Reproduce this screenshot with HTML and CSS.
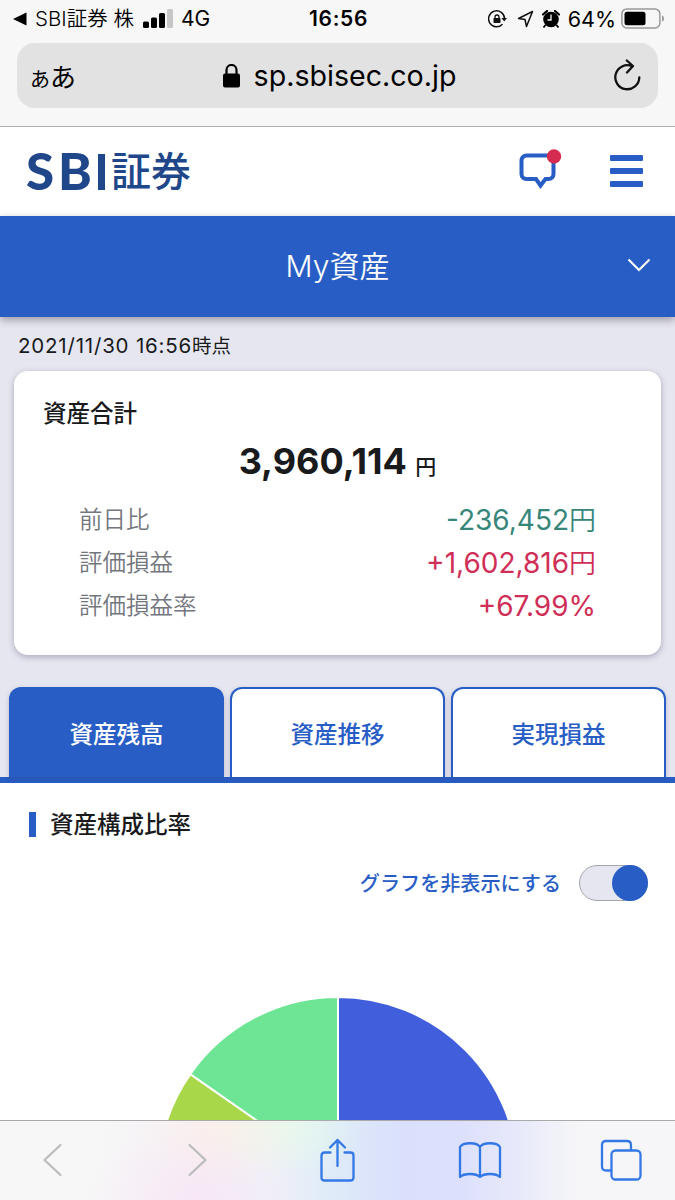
FILE: index.html
```html
<!DOCTYPE html>
<html lang="ja">
  <head>
    <meta charset="UTF-8">
    <title>My資産</title>
    <link rel="stylesheet" href="styles.css">
  </head>
  <body>
    <div class="browser">
      <div class="status">
        <div class="status-left">
          <svg width="14" height="14" viewBox="0 0 14 14"><path d="M0 7L13.500 0.500V13.500Z"/></svg>
          <span class="app">SBI証券 株</span>
          <svg class="signal" width="30" height="20" viewBox="0 0 30 20">
            <rect x="0" y="12.500" width="6" height="6.500" rx="1.500"/>
            <rect x="8" y="8.500" width="6" height="10.500" rx="1.500"/>
            <rect x="16" y="4" width="6" height="15" rx="1.500"/>
            <rect x="24" y="0" width="6" height="19" rx="1.500" fill="#c6c6c6"/>
          </svg>
          <span class="network">4G</span>
        </div>
        <div class="clock">16:56</div>
        <div class="status-right">
          <svg width="19" height="18" viewBox="0 0 19 18" fill="none" stroke="#111" stroke-width="1.500">
            <path d="M14.500 14.200A8 8 0 1 1 16.600 8.500"/>
            <path d="M13.500 8H19L16.200 11.500Z" fill="#111" stroke="none"/>
            <rect x="5.500" y="8" width="7" height="5" rx="0.800" fill="#111" stroke="none"/>
            <path d="M7 8.500V7A2 2 0 0 1 11 7V8.500" stroke-width="1.300"/>
          </svg>
          <svg class="location" width="17" height="18" viewBox="0 0 17 18" fill="none" stroke="#111" stroke-width="1.500" stroke-linejoin="round">
            <path d="M15.500 1.500L1.500 8.500L8 9.500L9.500 16.500Z"/>
          </svg>
          <svg class="alarm" width="18" height="18" viewBox="0 0 18 18">
            <circle cx="9" cy="9.500" r="7.800"/>
            <path d="M3.500 15L1.500 17.500M14.500 15L16.500 17.500" stroke="#000" stroke-width="1.800"/>
            <path d="M1 4.500L5 1M17 4.500L13 1" stroke="#000" stroke-width="2.200" stroke-linecap="round"/>
            <path d="M9 4.500V10H5.500" fill="none" stroke="#f7f7f7" stroke-width="1.300"/>
          </svg>
          <span class="percent">64%</span>
          <svg class="battery" width="44" height="21" viewBox="0 0 44 21">
            <rect x="0.900" y="0.900" width="38" height="19" rx="5" fill="none" stroke="#999" stroke-width="1.500"/>
            <rect x="3.500" y="3.700" width="21" height="13.500" rx="2.500"/>
            <path d="M41 7.500Q43 8 43 10.500Q43 13 41 13.500Z" fill="#999"/>
          </svg>
        </div>
      </div>
      <div class="address">
        <span class="reader"><small>あ</small>あ</span>
        <span class="url">
          <svg width="17" height="24" viewBox="0 0 17 24">
            <rect x="0" y="9.500" width="17" height="14" rx="2"/>
            <path d="M3.500 10V6A5 5 0 0 1 13.500 6V10" fill="none" stroke="#000" stroke-width="2.200"/>
          </svg>
          <span>sp.sbisec.co.jp</span>
        </span>
        <svg class="reload" width="27" height="33" viewBox="0 0 27 33" fill="none" stroke="#111" stroke-width="2.300" stroke-linecap="round" stroke-linejoin="round">
          <path d="M25.300 18.500A12 12 0 1 1 18 7.200M12.800 1.500L19 7L13 13.500"/>
        </svg>
      </div>
    </div>

    <div class="page">
      <div class="header">
        <div class="logo"><span class="s">S</span><span class="b">B</span><span class="i"></span><span class="kanji">証券</span></div>
        <div class="header-icons">
          <svg width="43" height="40" viewBox="0 0 43 40">
            <path d="M7.500 6.500H29.500A5 5 0 0 1 34.500 11.500V25A5 5 0 0 1 29.500 30H26.500L21.500 36.500L17 30H7.500A5 5 0 0 1 2.500 25V11.500A5 5 0 0 1 7.500 6.500Z" fill="none" stroke="#275dc5" stroke-width="4"/>
            <circle cx="35" cy="7.500" r="7.200" fill="#d52b50"/>
          </svg>
          <div class="menu"><i></i><i></i><i></i></div>
        </div>
      </div>

      <div class="title">
        <h1>My資産</h1>
        <svg width="24" height="14" viewBox="0 0 24 14" fill="none" stroke="#fff" stroke-width="2.200"><path d="M1.500 1.500L12 12L22.500 1.500"/></svg>
      </div>

      <div class="summary">
        <p class="date"><span>2021/11/30 16:56</span>時点</p>
        <div class="card">
          <h2>資産合計</h2>
          <p class="total">3,960,114 <small>円</small></p>
          <dl>
            <dt>前日比</dt><dd class="minus">-236,452<small>円</small></dd>
            <dt>評価損益</dt><dd class="plus">+1,602,816<small>円</small></dd>
            <dt>評価損益率</dt><dd class="plus">+67.99%</dd>
          </dl>
        </div>
        <ul class="tabs">
          <li class="active">資産残高</li>
          <li>資産推移</li>
          <li>実現損益</li>
        </ul>
      </div>

      <div class="balance">
        <h3>資産構成比率</h3>
        <div class="toggle">
          <span>グラフを非表示にする</span>
          <div class="switch"></div>
        </div>
        <svg class="chart" width="360" height="360" viewBox="-180 -180 360 360" stroke="#fff" stroke-width="2">
          <path d="M0 0V-180A180 180 0 0 1 0 180Z" fill="#415fdc"/>
          <path d="M0 0V180A180 180 0 0 1 -147.700 -102.900Z" fill="#a8d84a"/>
          <path d="M0 0L-147.700 -102.900A180 180 0 0 1 0 -180Z" fill="#6de594"/>
        </svg>
      </div>
    </div>

    <div class="toolbar">
      <svg width="44" height="34" viewBox="-12.500 0 44 34" class="off"><path d="M18 2L2 17L18 32"/></svg>
      <svg width="44" height="34" viewBox="-14.500 0 44 34" class="off"><path d="M2 2L18 17L2 32"/></svg>
      <svg width="44" height="44" viewBox="-4.500 0 44 44"><path d="M11 14.500H5Q2 14.500 2 17.500V39.500Q2 42.500 5 42.500H31Q34 42.500 34 39.500V17.500Q34 14.500 31 14.500H25M18 28V2M10.500 9.500L18 2L25.500 9.500"/></svg>
      <svg width="44" height="38" viewBox="0 0 44 38"><path d="M22 6C19 1 5 1 2 6V36C6 32 18 32 22 36C26 32 38 32 42 36V6C39 1 25 1 22 6V36"/></svg>
      <svg width="44" height="42" viewBox="0 0 44 42"><path d="M11 31.500H6Q2 31.500 2 27.500V6Q2 2 6 2H27Q31 2 31 6V11"/><rect x="11.500" y="11.500" width="29" height="29" rx="4"/></svg>
    </div>
  </body>
</html>
```

FILE: styles.css
```css
body
{
  box-sizing: border-box;
  width: 675px;
  height: 1200px;
  margin: 0;
  display: flex;
  flex-direction: column;
  overflow: hidden;
  background: #fff;
  color: #191a1c;
  font-family: Inter, "Noto Sans CJK JP", sans-serif;
}
svg
{
  display: block;
  flex: none;
}
h1, h2, h3, p, dl, dd, ul
{
  margin: 0;
  padding: 0;
}

/* browser bars */
.browser
{
  box-sizing: border-box;
  height: 127px;
  flex: none;
  background: #f7f7f7;
  border-bottom: 1px solid #b2b2b2;
  color: #000;
}
.status
{
  display: grid;
  grid-template-columns: 1fr auto 1fr;
  align-items: center;
  height: 37px;
  padding: 0 10px 0 13px;
  font-size: 21px;
  line-height: 36px;
}
.status-left,
.status-right
{
  display: flex;
  align-items: center;
  white-space: nowrap;
}
.status-right
{
  justify-content: flex-end;
}
.app
{
  margin-left: 8px;
  font-size: 20.5px;
  font-weight: 350;
}
.signal
{
  margin: 0 8px 0 9px;
}
.clock
{
  margin-right: 1px;
  font-weight: 600;
  font-size: 21px;
  letter-spacing: 0.7px;
}
.location
{
  margin: 0 8px 0 10px;
}
.percent
{
  margin: 0 5px 0 8px;
  font-size: 21.5px;
}
.address
{
  display: flex;
  align-items: center;
  justify-content: space-between;
  box-sizing: border-box;
  height: 65px;
  margin: 6px 17px 0;
  padding: 0 17px 0 13px;
  border-radius: 18px;
  background: #e2e2e2;
}
.reader
{
  width: 35px;
  font-size: 26px;
  white-space: nowrap;
}
.reader small
{
  font-size: 20px;
}
.url
{
  display: flex;
  align-items: center;
  gap: 14px;
  font-size: 28.600px;
}

/* site header */
.page
{
  flex: 1;
  min-height: 0;
  overflow: hidden;
}
.header
{
  display: flex;
  align-items: center;
  justify-content: space-between;
  height: 89px;
  padding: 0 32px 0 26px;
}
.logo
{
  display: flex;
  align-items: center;
  height: 60px;
  color: #20478a;
  font: 900 51px/60px Lato, sans-serif;
}
.logo .s
{
  width: 32px;
}
.logo .b
{
  width: 40px;
}
.logo .s,
.logo .b
{
  padding-bottom: 2px;
}
.logo .i
{
  width: 7px;
  height: 36px;
  margin-right: 6px;
  background: #20478a;
}
.logo .kanji
{
  padding-bottom: 6px;
  font: 500 40px/60px "Noto Sans CJK JP", sans-serif;
}
.header-icons
{
  display: flex;
  gap: 48px;
  padding-bottom: 5px;
}
.menu
{
  display: flex;
  flex-direction: column;
  gap: 7px;
  padding-top: 6px;
}
.menu i
{
  width: 33px;
  height: 6px;
  border-radius: 1px;
  background: #275dc5;
}
.title
{
  position: relative;
  display: grid;
  grid-template-columns: 1fr auto 1fr;
  align-items: center;
  height: 101px;
  background: #275dc5;
  box-shadow: 0 3px 8px rgba(60, 40, 50, 0.4);
  color: #fff;
}
.title h1
{
  grid-column: 2;
  padding-bottom: 6px;
  font-size: 30px;
  font-weight: 350;
}
.title svg
{
  justify-self: end;
  margin: 0 24px 3px 0;
}

/* totals */
.summary
{
  background: #e5e6ef;
}
.date
{
  height: 54px;
  padding-left: 18px;
  font-size: 19.5px;
  line-height: 57px;
}
.date span
{
  font-size: 20.500px;
  letter-spacing: 0.8px;
}
.card
{
  box-sizing: border-box;
  height: 284px;
  margin: 0 14px;
  padding: 25px 65px 0;
  border-radius: 14px;
  background: #fff;
  box-shadow: 0 2px 6px rgba(60, 55, 100, 0.35);
}
.card h2
{
  margin-left: -36px;
  font-size: 23.5px;
  font-weight: 500;
  line-height: 36px;
}
.total
{
  height: 66px;
  font-size: 36px;
  font-weight: 700;
  line-height: 58px;
  text-align: center;
}
.total small
{
  font-size: 21px;
  font-weight: 500;
}
.card dl
{
  display: grid;
  grid-template-columns: auto 1fr;
  grid-auto-rows: 43px;
  line-height: 43px;
}
.card dt
{
  color: #74767e;
  font-size: 23.5px;
  font-weight: 350;
}
.card dd
{
  font-size: 28px;
  font-weight: 400;
  line-height: 44px;
  text-align: right;
}
.card dd small
{
  font-size: 27px;
  font-weight: 350;
}
.minus
{
  color: #37867a;
}
.plus
{
  color: #cf2e56;
}
.tabs
{
  display: flex;
  gap: 6px;
  margin-top: 32px;
  padding: 0 9px;
  border-bottom: 6px solid #275dc5;
  list-style: none;
}
.tabs li
{
  box-sizing: border-box;
  flex: 1;
  height: 90px;
  border: 2px solid #275dc5;
  border-bottom: 0;
  border-radius: 12px 12px 0 0;
  background: #fff;
  box-shadow: 0 2px 5px rgba(60, 55, 100, 0.25);
  color: #275dc5;
  font-size: 23.5px;
  font-weight: 500;
  line-height: 91px;
  text-align: center;
}
.tabs .active
{
  background: #275dc5;
  color: #fff;
}

/* chart */
.balance h3
{
  display: flex;
  align-items: center;
  gap: 14px;
  padding: 24px 0 0 29px;
  font-size: 23.500px;
  font-weight: 500;
  line-height: 35px;
}
.balance h3::before
{
  content: "";
  width: 7px;
  height: 25px;
  background: #275dc5;
}
.toggle
{
  display: flex;
  align-items: center;
  justify-content: flex-end;
  gap: 18px;
  height: 36px;
  margin: 23px 27px 0 0;
  color: #275dc5;
  font-size: 20.100px;
  font-weight: 500;
}
.toggle span
{
  padding-bottom: 2px;
}
.switch
{
  display: flex;
  justify-content: flex-end;
  box-sizing: border-box;
  width: 69px;
  height: 36px;
  border: 1.500px solid #a4a6ad;
  border-radius: 18px;
  background: #e5e6ef;
}
.switch::before
{
  content: "";
  width: 36px;
  height: 36px;
  margin: -1px;
  border-radius: 50%;
  background: #275dc5;
}
.chart
{
  margin: 96px auto 0;
}

.toolbar
{
  display: flex;
  justify-content: space-between;
  box-sizing: border-box;
  height: 80px;
  flex: none;
  padding: 18px 31px 0 30px;
  border-top: 1px solid #aaa;
  background:
    radial-gradient(ellipse 90px 50px at 225px 10px, rgba(255, 238, 228, 0.6), transparent),
    radial-gradient(ellipse 110px 70px at 195px 75px, rgba(248, 226, 246, 0.6), transparent),
    radial-gradient(ellipse 80px 50px at 285px 5px, rgba(228, 252, 235, 0.8), transparent),
    linear-gradient(90deg, #f7f7f7 100px, #f5eff5 200px, #eff1f7 270px, #dfebf8 330px, #dae0fc 400px, #dce0fc 460px, #e8eafa 520px, #f6f6f8 580px);
}
.toolbar svg
{
  align-self: center;
  margin-bottom: 19px;
  fill: none;
  stroke: #3478e5;
  stroke-width: 2.300;
  stroke-linecap: round;
  stroke-linejoin: round;
}
.toolbar .off
{
  stroke: #bcbcbe;
}
```
